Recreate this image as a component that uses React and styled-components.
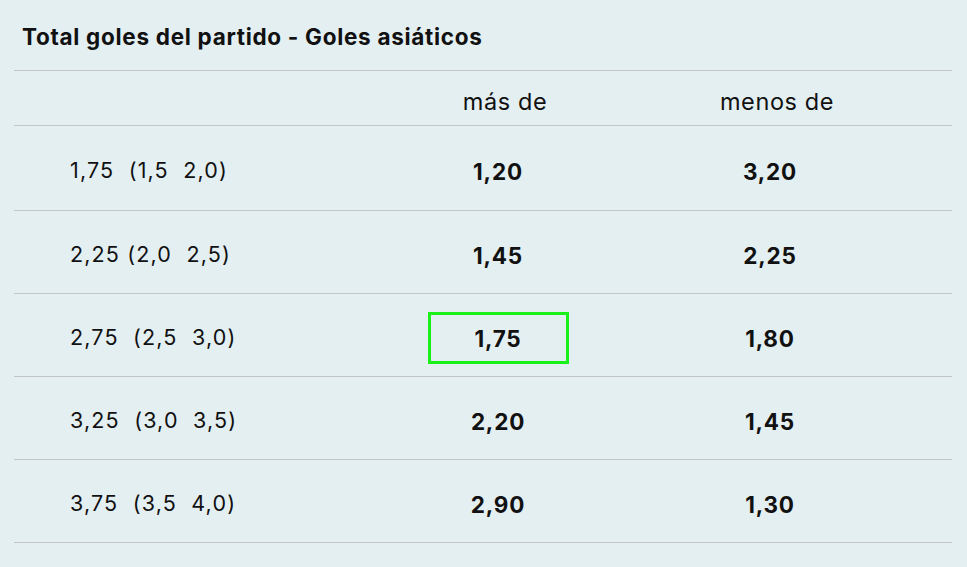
import React from "react";
import styled, { createGlobalStyle } from "styled-components";

const GlobalStyle = createGlobalStyle`
  html, body {
    margin: 0;
    padding: 0;
    background: #e4eff1;
  }
  body {
    font-family: Inter, "Noto Sans", sans-serif;
    color: #111;
  }
`;

const rows = [
  { label: "1,75  (1,5  2,0)", over: "1,20", under: "3,20" },
  { label: "2,25 (2,0  2,5)", over: "1,45", under: "2,25" },
  { label: "2,75  (2,5  3,0)", over: "1,75", under: "1,80", selected: true },
  { label: "3,25  (3,0  3,5)", over: "2,20", under: "1,45" },
  { label: "3,75  (3,5  4,0)", over: "2,90", under: "1,30" },
];

const App = () => (
  <>
    <GlobalStyle />
    <Page>
      <Title>Total goles del partido - Goles asiáticos</Title>
      <Table>
        <HeaderRow>
          <Cell />
          <HeadCell>más de</HeadCell>
          <HeadCell>menos de</HeadCell>
        </HeaderRow>
        {rows.map((row) => (
          <Row key={row.label}>
            <Label>{row.label}</Label>
            <Odd>
              <OddBox selected={row.selected}>{row.over}</OddBox>
            </Odd>
            <Odd>
              <OddBox>{row.under}</OddBox>
            </Odd>
          </Row>
        ))}
      </Table>
    </Page>
  </>
);

export default App;

const Page = styled.div`
  width: 967px;
  height: 567px;
  box-sizing: border-box;
  padding: 0 15px 0 14px;
`;

const Title = styled.div`
  font-size: 22.5px;
  line-height: 27px;
  font-weight: 700;
  letter-spacing: 0.7px;
  padding: 23px 0 0 8px;
  height: 70px;
  box-sizing: border-box;
`;

const Table = styled.div`
  display: flex;
  flex-direction: column;
  border-top: 1px solid #c2c6c8;
`;

const BaseRow = styled.div`
  display: grid;
  grid-template-columns: 330px 308px 236px;
  align-items: center;
  border-bottom: 1px solid #c2c6c8;
`;

const HeaderRow = styled(BaseRow)`
  height: 54px;
`;

const Row = styled(BaseRow)`
  height: 82px;

  &:nth-child(2) {
    height: 84px;
  }
`;

const Cell = styled.div``;

const HeadCell = styled.div`
  font-size: 23.5px;
  letter-spacing: 0.6px;
  text-align: center;
  padding-left: 14px;
  padding-top: 7px;
`;

const Label = styled.div`
  font-size: 21.5px;
  letter-spacing: 1.15px;
  white-space: pre;
  padding-left: 56px;
  padding-top: 3px;
`;

const Odd = styled.div`
  display: flex;
  justify-content: center;
`;

const OddBox = styled.div`
  width: 141px;
  height: 52px;
  margin-top: 6px;
  box-sizing: border-box;
  display: flex;
  align-items: center;
  justify-content: center;
  font-size: 22.5px;
  font-weight: 700;
  letter-spacing: 0.8px;
  border: 3px solid ${(props) => (props.selected ? "#1af01a" : "transparent")};
`;
